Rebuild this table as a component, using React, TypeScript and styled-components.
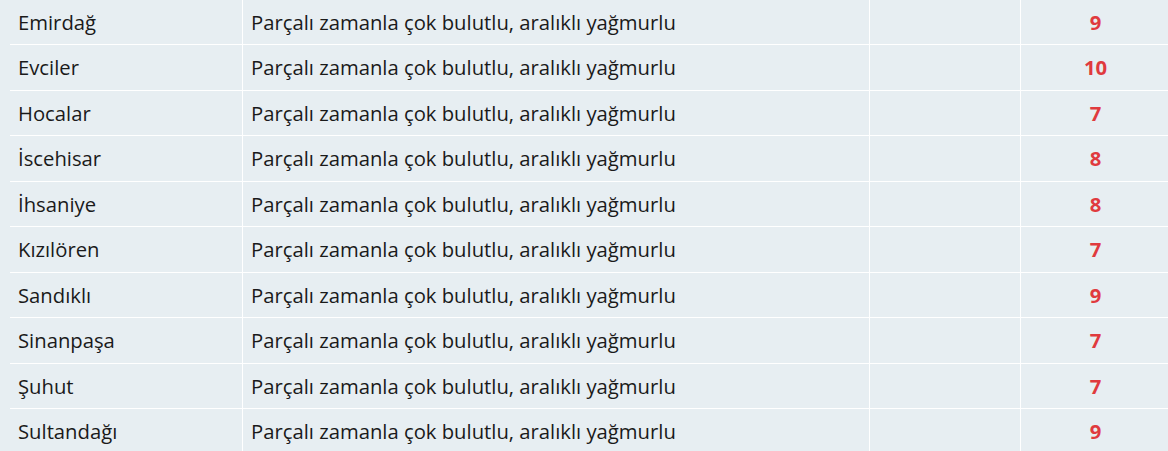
import React from 'react';
import styled, { createGlobalStyle } from 'styled-components';

const GlobalStyle = createGlobalStyle`
  html, body {
    margin: 0;
    padding: 0;
    background: #e7eef2;
    overflow: hidden;
  }
`;

const Page = styled.div`
  padding-left: 10px;
  font-family: 'Open Sans', 'Noto Sans', sans-serif;
  font-size: 20.25px;
  color: #1a1a1a;
`;

const Table = styled.div`
  display: flex;
  flex-direction: column;
  width: 1160px;
`;

const Row = styled.div`
  display: grid;
  grid-template-columns: 232px 627px 151px 1fr;
  height: 45.5px;
  border-top: 1px solid #ffffff;
  box-sizing: border-box;

  &:first-child {
    height: 44px;
    border-top: none;
  }
`;

const Cell = styled.div<{ $center?: boolean }>`
  display: flex;
  align-items: center;
  justify-content: ${(p) => (p.$center ? 'center' : 'flex-start')};
  padding: 0 8px;
  border-left: 1px solid #ffffff;
  white-space: nowrap;

  &:first-child {
    border-left: none;
  }
`;

const Value = styled.span`
  color: #e03a3e;
  font-weight: 700;
`;

const rows: [string, number][] = [
  ['Emirdağ', 9],
  ['Evciler', 10],
  ['Hocalar', 7],
  ['İscehisar', 8],
  ['İhsaniye', 8],
  ['Kızılören', 7],
  ['Sandıklı', 9],
  ['Sinanpaşa', 7],
  ['Şuhut', 7],
  ['Sultandağı', 9],
];

const App = () => (
  <>
    <GlobalStyle />
    <Page>
      <Table>
        {rows.map(([name, val]) => (
          <Row key={name}>
            <Cell>{name}</Cell>
            <Cell>Parçalı zamanla çok bulutlu, aralıklı yağmurlu</Cell>
            <Cell />
            <Cell $center>
              <Value>{val}</Value>
            </Cell>
          </Row>
        ))}
      </Table>
    </Page>
  </>
);

export default App;
